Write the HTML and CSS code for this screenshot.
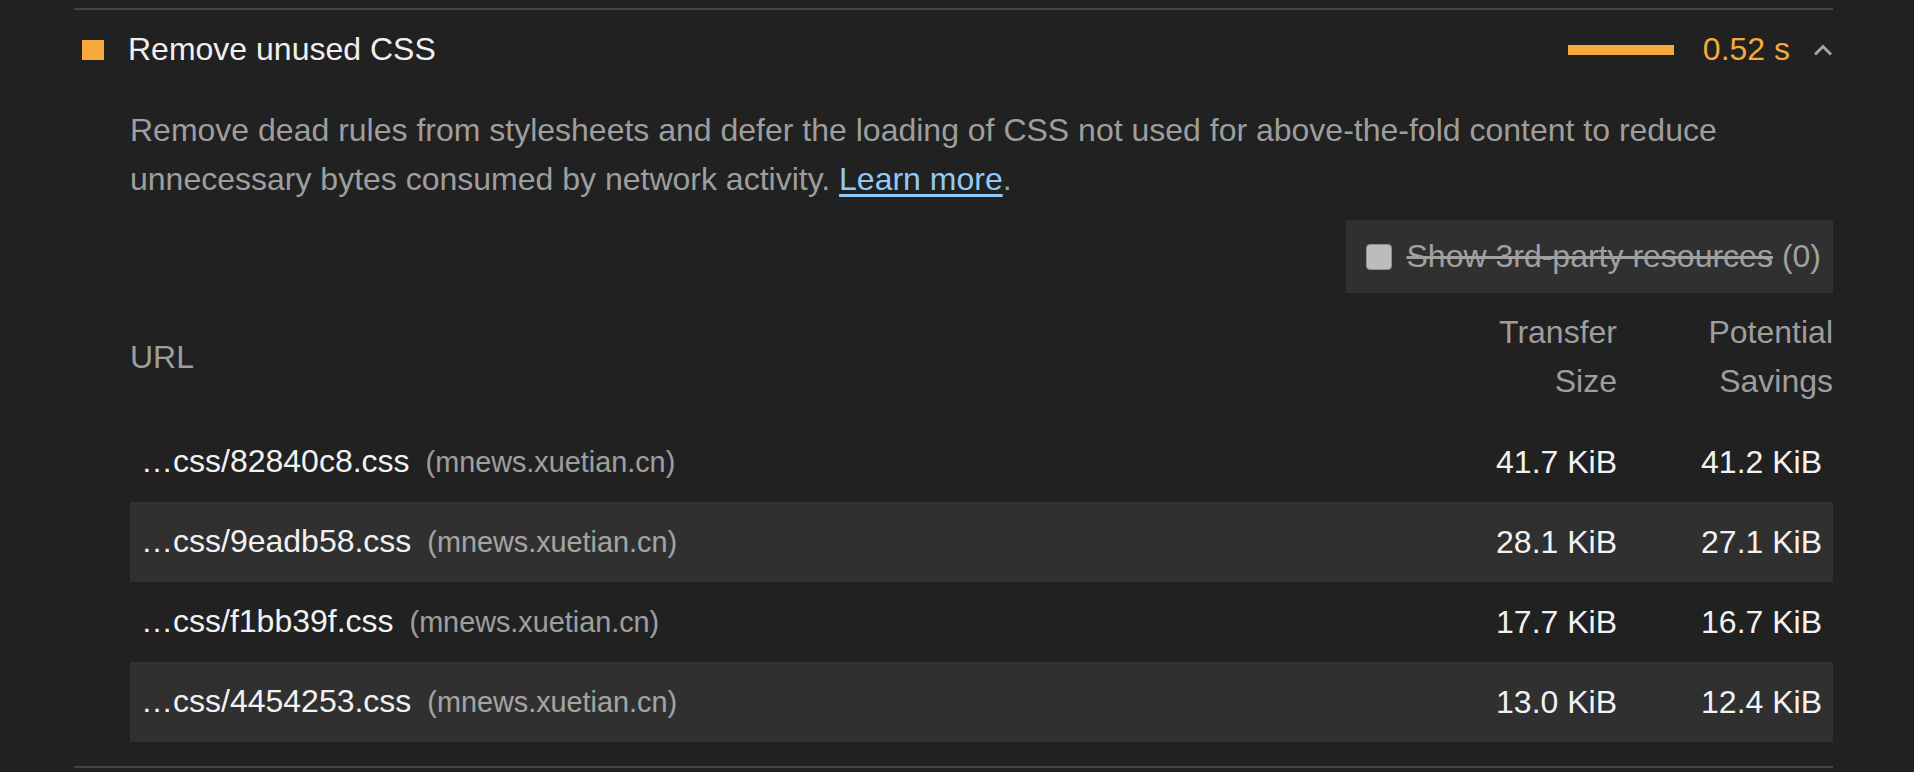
FILE: index.html
```html
<!DOCTYPE html>
<html lang="en">
<head>
<meta charset="utf-8">
<title>Remove unused CSS</title>
<link rel="stylesheet" href="styles.css">
</head>
<body>
<section class="audit">
  <div class="audit-header">
    <span class="score-icon"></span>
    <span class="audit-title">Remove unused CSS</span>
    <div class="audit-metric">
      <span class="metric-bar"></span>
      <span class="metric-value">0.52 s</span>
      <svg class="chevron" width="20" height="12" viewBox="0 0 20 12" aria-hidden="true">
        <polyline points="2,10.5 10,2.5 18,10.5" fill="none" stroke="#a3a3a3" stroke-width="3"/>
      </svg>
    </div>
  </div>
  <div class="audit-body">
    <p class="description">Remove dead rules from stylesheets and defer the loading of CSS not used for above-the-fold content to reduce unnecessary bytes consumed by network activity. <a class="link" href="#">Learn more</a>.</p>
    <div class="filter-row">
      <div class="filter">
        <span class="checkbox"></span>
        <span class="filter-label">Show 3rd-party resources</span>
        <span class="filter-count">(0)</span>
      </div>
    </div>
    <div class="table">
      <div class="trow thead">
        <div class="cell col-url">URL</div>
        <div class="cell col-size">Transfer<br>Size</div>
        <div class="cell col-save">Potential<br>Savings</div>
      </div>
      <div class="trow">
        <div class="cell col-url"><span class="url">…css/82840c8.css</span><span class="host">(mnews.xuetian.cn)</span></div>
        <div class="cell col-size">41.7 KiB</div>
        <div class="cell col-save">41.2 KiB</div>
      </div>
      <div class="trow striped">
        <div class="cell col-url"><span class="url">…css/9eadb58.css</span><span class="host">(mnews.xuetian.cn)</span></div>
        <div class="cell col-size">28.1 KiB</div>
        <div class="cell col-save">27.1 KiB</div>
      </div>
      <div class="trow">
        <div class="cell col-url"><span class="url">…css/f1bb39f.css</span><span class="host">(mnews.xuetian.cn)</span></div>
        <div class="cell col-size">17.7 KiB</div>
        <div class="cell col-save">16.7 KiB</div>
      </div>
      <div class="trow striped">
        <div class="cell col-url"><span class="url">…css/4454253.css</span><span class="host">(mnews.xuetian.cn)</span></div>
        <div class="cell col-size">13.0 KiB</div>
        <div class="cell col-save">12.4 KiB</div>
      </div>
    </div>
  </div>
</section>
</body>
</html>
```

FILE: styles.css
```css
html, body {
  margin: 0;
  padding: 0;
  background: #212121;
}

body {
  font-family: "Liberation Sans", Arial, Helvetica, sans-serif;
  font-size: 32px;
  line-height: 49px;
  color: #eeeeee;
  padding-top: 8px;
}

.audit {
  margin-left: 74px;
  width: 1759px;
  border-top: 2px solid #444444;
  border-bottom: 2px solid #444444;
  padding-bottom: 24px;
}

.audit-header {
  height: 78px;
  display: flex;
  align-items: center;
  padding-left: 8px;
}

.score-icon {
  width: 22px;
  height: 20px;
  background: #f4aa3c;
  margin-right: 24px;
  margin-top: 1px;
  flex: none;
}

.audit-title {
  flex: 1;
  color: #f0f0f0;
  line-height: 48px;
}

.audit-metric {
  display: flex;
  align-items: center;
}

.metric-bar {
  width: 106px;
  height: 10px;
  background: #f4aa3c;
  margin-right: 29px;
  margin-top: 2px;
}

.metric-value {
  color: #f4aa3c;
  line-height: 48px;
  margin-right: 23px;
}

.chevron {
  display: block;
  margin-top: 1px;
}

.audit-body {
  padding-left: 56px;
}

.description {
  margin: 18px 0 0 0;
  color: #9e9e9e;
}

.link {
  color: #90caf9;
  text-decoration: underline;
  text-underline-offset: 4px;
}

.filter-row {
  display: flex;
  justify-content: flex-end;
  margin-top: 16px;
}

.filter {
  display: flex;
  align-items: center;
  background: #303030;
  padding: 12px 12px 12px 20px;
  color: #a0a0a0;
}

.checkbox {
  width: 24px;
  height: 24px;
  border: 1px solid #8f8f8f;
  border-radius: 4px;
  background: #bcbcbc;
  margin-right: 15px;
  flex: none;
}

.filter-label {
  text-decoration: line-through;
  margin-right: 9px;
}

.table {
  display: flex;
  flex-direction: column;
}

.trow {
  display: flex;
  align-items: center;
  height: 80px;
}

.trow.thead {
  height: auto;
  padding: 15px 0 16px 0;
  color: #9e9e9e;
}

.trow.striped {
  background: #303030;
}

.cell {
  white-space: nowrap;
}

.col-url {
  flex: 1;
  padding-left: 11px;
  color: #f2f2f2;
}

.thead .col-url {
  padding-left: 0;
  color: #9e9e9e;
}

.col-size {
  width: 200px;
  text-align: right;
  color: #f2f2f2;
}

.col-save {
  width: 216px;
  text-align: right;
  padding-right: 11px;
  box-sizing: border-box;
  color: #f2f2f2;
}

.thead .col-size,
.thead .col-save {
  color: #9e9e9e;
}

.thead .col-save {
  padding-right: 0;
}

.host {
  margin-left: 16px;
  font-size: 90%;
  color: #f2f2f2;
  opacity: 0.6;
}
```
